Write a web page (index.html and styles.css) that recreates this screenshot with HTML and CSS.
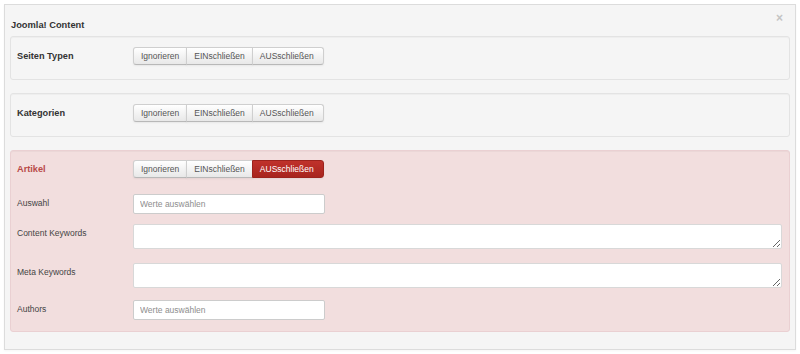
FILE: index.html
```html
<!DOCTYPE html>
<html lang="de">
<head>
<meta charset="utf-8">
<title>Joomla! Content</title>
<link rel="stylesheet" href="styles.css">
</head>
<body>
<div class="panel">
  <div class="header">
    <span class="title">Joomla! Content</span>
    <span class="close">×</span>
  </div>

  <div class="well">
    <div class="row">
      <div class="label strong">Seiten Typen</div>
      <div class="btn-group">
        <span class="btn">Ignorieren</span><span class="btn">EINschließen</span><span class="btn">AUSschließen</span>
      </div>
    </div>
  </div>

  <div class="well">
    <div class="row">
      <div class="label strong">Kategorien</div>
      <div class="btn-group">
        <span class="btn">Ignorieren</span><span class="btn">EINschließen</span><span class="btn">AUSschließen</span>
      </div>
    </div>
  </div>

  <div class="well well-danger">
    <div class="row">
      <div class="label strong danger">Artikel</div>
      <div class="btn-group">
        <span class="btn">Ignorieren</span><span class="btn">EINschließen</span><span class="btn btn-active">AUSschließen</span>
      </div>
    </div>
    <div class="row row-select">
      <div class="label">Auswahl</div>
      <input class="field" type="text" placeholder="Werte auswählen">
    </div>
    <div class="row row-area">
      <div class="label">Content Keywords</div>
      <textarea class="area"></textarea>
    </div>
    <div class="row row-area-next">
      <div class="label">Meta Keywords</div>
      <textarea class="area"></textarea>
    </div>
    <div class="row row-last">
      <div class="label">Authors</div>
      <input class="field" type="text" placeholder="Werte auswählen">
    </div>
  </div>
</div>
</body>
</html>
```

FILE: styles.css
```css
html, body {
  margin: 0;
  padding: 0;
  background: #ffffff;
}

body {
  font-family: "Liberation Sans", Arial, sans-serif;
  font-size: 8.5px;
  color: #444;
}

.panel {
  margin: 4px;
  border: 1px solid #dcdcdc;
  background: #f5f5f5;
  padding: 0 5px 17px 5px;
  box-shadow: 0 1px 2px rgba(0, 0, 0, 0.04);
}

.header {
  display: flex;
  justify-content: space-between;
  height: 31px;
  box-sizing: border-box;
  padding: 14px 7px 0 1px;
}

.title {
  font-weight: bold;
  font-size: 9.3px;
  line-height: 12px;
  color: #333;
}

.close {
  font-size: 12px;
  line-height: 10px;
  font-weight: bold;
  color: #c4c4c4;
  margin-top: -6px;
}

.well {
  border: 1px solid #e3e3e3;
  border-radius: 3px;
  background: #f5f5f5;
  box-shadow: inset 0 1px 1px rgba(0, 0, 0, 0.03);
  padding: 10px 7px 14px 6px;
  margin-bottom: 13px;
}

.well-danger {
  background: #f2dede;
  border-color: #ead0d2;
  padding-top: 9px;
  padding-bottom: 11px;
  margin-bottom: 0;
}

.row {
  display: flex;
  align-items: flex-start;
}

.row-select {
  margin-top: 16px;
}

.row-area {
  margin-top: 10px;
}

.row-area-next {
  margin-top: 14px;
}

.row-last {
  margin-top: 12px;
}

.label {
  width: 116px;
  flex: none;
  line-height: 18px;
  color: #444;
}

.strong {
  font-weight: bold;
  font-size: 9.2px;
  color: #333;
}

.danger {
  color: #b94a48;
}

.btn-group {
  display: flex;
}

.btn {
  display: block;
  height: 18px;
  box-sizing: border-box;
  line-height: 16px;
  padding: 0 7px;
  border: 1px solid #cfcfcf;
  border-bottom-color: #b8b8b8;
  background: linear-gradient(#ffffff, #e8e8e8);
  color: #555;
  box-shadow: 0 1px 2px rgba(0, 0, 0, 0.06);
}

.btn + .btn {
  margin-left: -1px;
}

.btn:first-child {
  border-radius: 3px 0 0 3px;
}

.btn:last-child {
  padding-right: 9px;
  border-radius: 0 3px 3px 0;
}

.btn-active {
  background: linear-gradient(#c0322b, #a8241e);
  border-color: #9c221c;
  color: #ffffff;
}

.field {
  width: 192px;
  height: 20px;
  box-sizing: border-box;
  margin: 0;
  border: 1px solid #cccccc;
  border-radius: 2px;
  background: #ffffff;
  padding: 0 6px;
  font-family: "Liberation Sans", Arial, sans-serif;
  font-size: 8.5px;
  color: #555;
  outline: none;
}

.field::placeholder {
  color: #8e8e8e;
}

.area {
  width: 649px;
  height: 25px;
  box-sizing: border-box;
  margin: 0;
  border: 1px solid #d8d8d8;
  border-radius: 2px;
  background: #ffffff;
  padding: 2px 6px;
  font-family: "Liberation Sans", Arial, sans-serif;
  font-size: 8.5px;
  outline: none;
  display: block;
}
```
